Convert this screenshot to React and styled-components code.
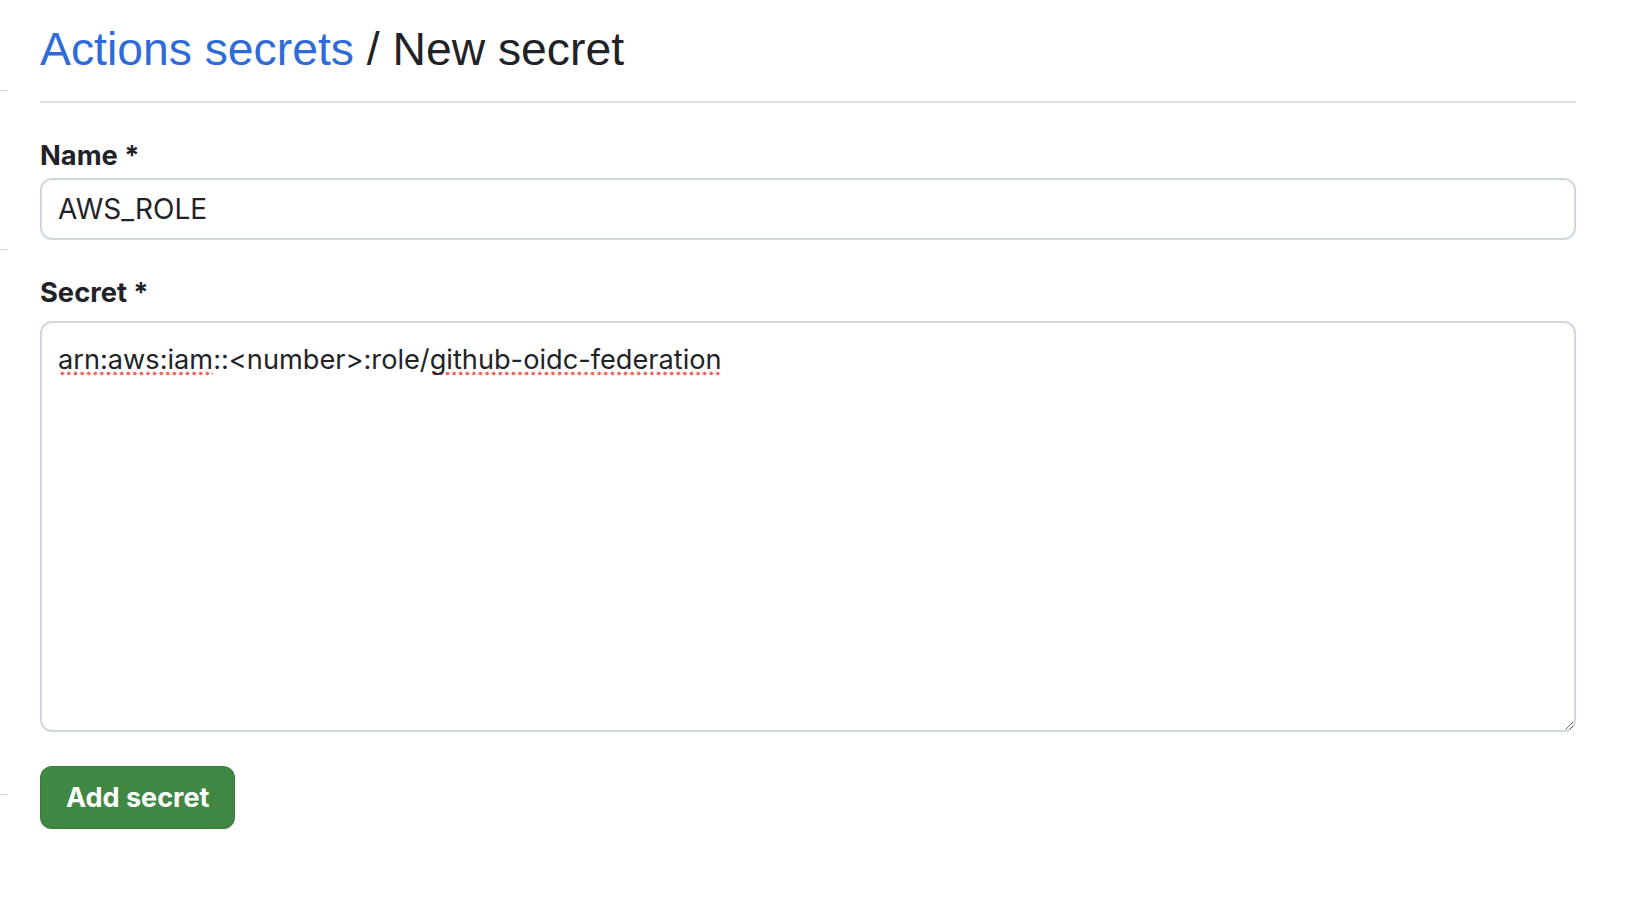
import React, { useState } from "react"
import styled, { createGlobalStyle } from "styled-components"

const GlobalStyle = createGlobalStyle`
body {
    margin: 0;
    background: #ffffff;
    font-family: Inter, "Noto Sans", sans-serif;
    color: #1f2328;
}
`

const Page = styled.div`
display: flex;
gap: 32px;
padding-top: 20px;
`

const SideNav = styled.div`
width: 8px;
flex-shrink: 0;
margin-top: -20px;
display: flex;
flex-direction: column;
`

const SideItem = styled.div`
height: ${(p) => p.$h}px;
border-bottom: ${(p) => (p.$line ? "1px solid #d0d7de" : "none")};
box-sizing: border-box;
`

const Content = styled.div`
width: 1536px;
`

const Subhead = styled.div`
padding-bottom: 22px;
border-bottom: 2px solid #d8dee4;
`

const Heading = styled.h2`
margin: 0;
padding-top: 1px;
font-family: "Liberation Sans", Arial, sans-serif;
font-weight: 400;
font-size: 46.3px;
line-height: 57.5px;
color: #1f2328;
`

const Crumb = styled.a`
color: #2f6bd8;
text-decoration: none;
`

const Field = styled.div`
margin-top: ${(p) => p.$top}px;
`

const Label = styled.label`
display: block;
font-weight: 700;
font-size: 27.3px;
line-height: 36px;
margin-bottom: ${(p) => p.$gap}px;
color: #1f2328;
`

const TextInput = styled.input`
display: block;
width: 100%;
height: 62px;
box-sizing: border-box;
padding: 0 16px;
border: 2px solid #d0d7de;
border-radius: 12px;
font-family: Inter, "Noto Sans", sans-serif;
font-size: 28px;
color: #1f2328;
background: #ffffff;
outline: none;
`

const SecretBox = styled.div`
height: 411px;
box-sizing: border-box;
padding: 16px 16px 14px;
border: 2px solid #d0d7de;
border-radius: 12px;
font-size: 27.2px;
line-height: 42px;
color: #1f2328;
overflow: auto;
resize: vertical;
outline: none;
white-space: pre-wrap;
`

// pontinhos vermelhos do corretor ortográfico
const Misspelled = styled.span`
background-image: radial-gradient(circle, #f0675e 1.6px, transparent 2.2px);
background-size: 6.6px 5px;
background-repeat: repeat-x;
background-position: 1px 100%;
`

const Actions = styled.div`
margin-top: 34px;
`

const PrimaryButton = styled.button`
height: 63px;
padding: 0 25px;
border: 1px solid rgba(31, 35, 40, 0.15);
border-radius: 12px;
background: #418744;
color: #ffffff;
font-family: Inter, "Noto Sans", sans-serif;
font-weight: 700;
font-size: 27px;
cursor: pointer;
box-shadow: 0 1px 0 rgba(31, 35, 40, 0.1);
`

export default function App() {
    const [nome, setNome] = useState("AWS_ROLE")

    return (
        <>
            <GlobalStyle />
            <Page>
                <SideNav>
                    <SideItem $h={91} $line />
                    <SideItem $h={159} $line />
                    <SideItem $h={545} $line />
                </SideNav>

                <Content>
                    <Subhead>
                        <Heading>
                            <Crumb href="#">Actions secrets</Crumb> / New secret
                        </Heading>
                    </Subhead>

                    <Field $top={35}>
                        <Label htmlFor="secret_name" $gap={4}>Name *</Label>
                        <TextInput
                            id="secret_name"
                            value={nome}
                            onChange={(e) => setNome(e.target.value)}
                        />
                    </Field>

                    <Field $top={35}>
                        <Label $gap={10}>Secret *</Label>
                        <SecretBox contentEditable suppressContentEditableWarning role="textbox" spellCheck={false}>
                            <Misspelled>arn:aws:iam</Misspelled>::&lt;number&gt;:role/<Misspelled>github-oidc-federation</Misspelled>
                        </SecretBox>
                    </Field>

                    <Actions>
                        <PrimaryButton>Add secret</PrimaryButton>
                    </Actions>
                </Content>
            </Page>
        </>
    )
}
